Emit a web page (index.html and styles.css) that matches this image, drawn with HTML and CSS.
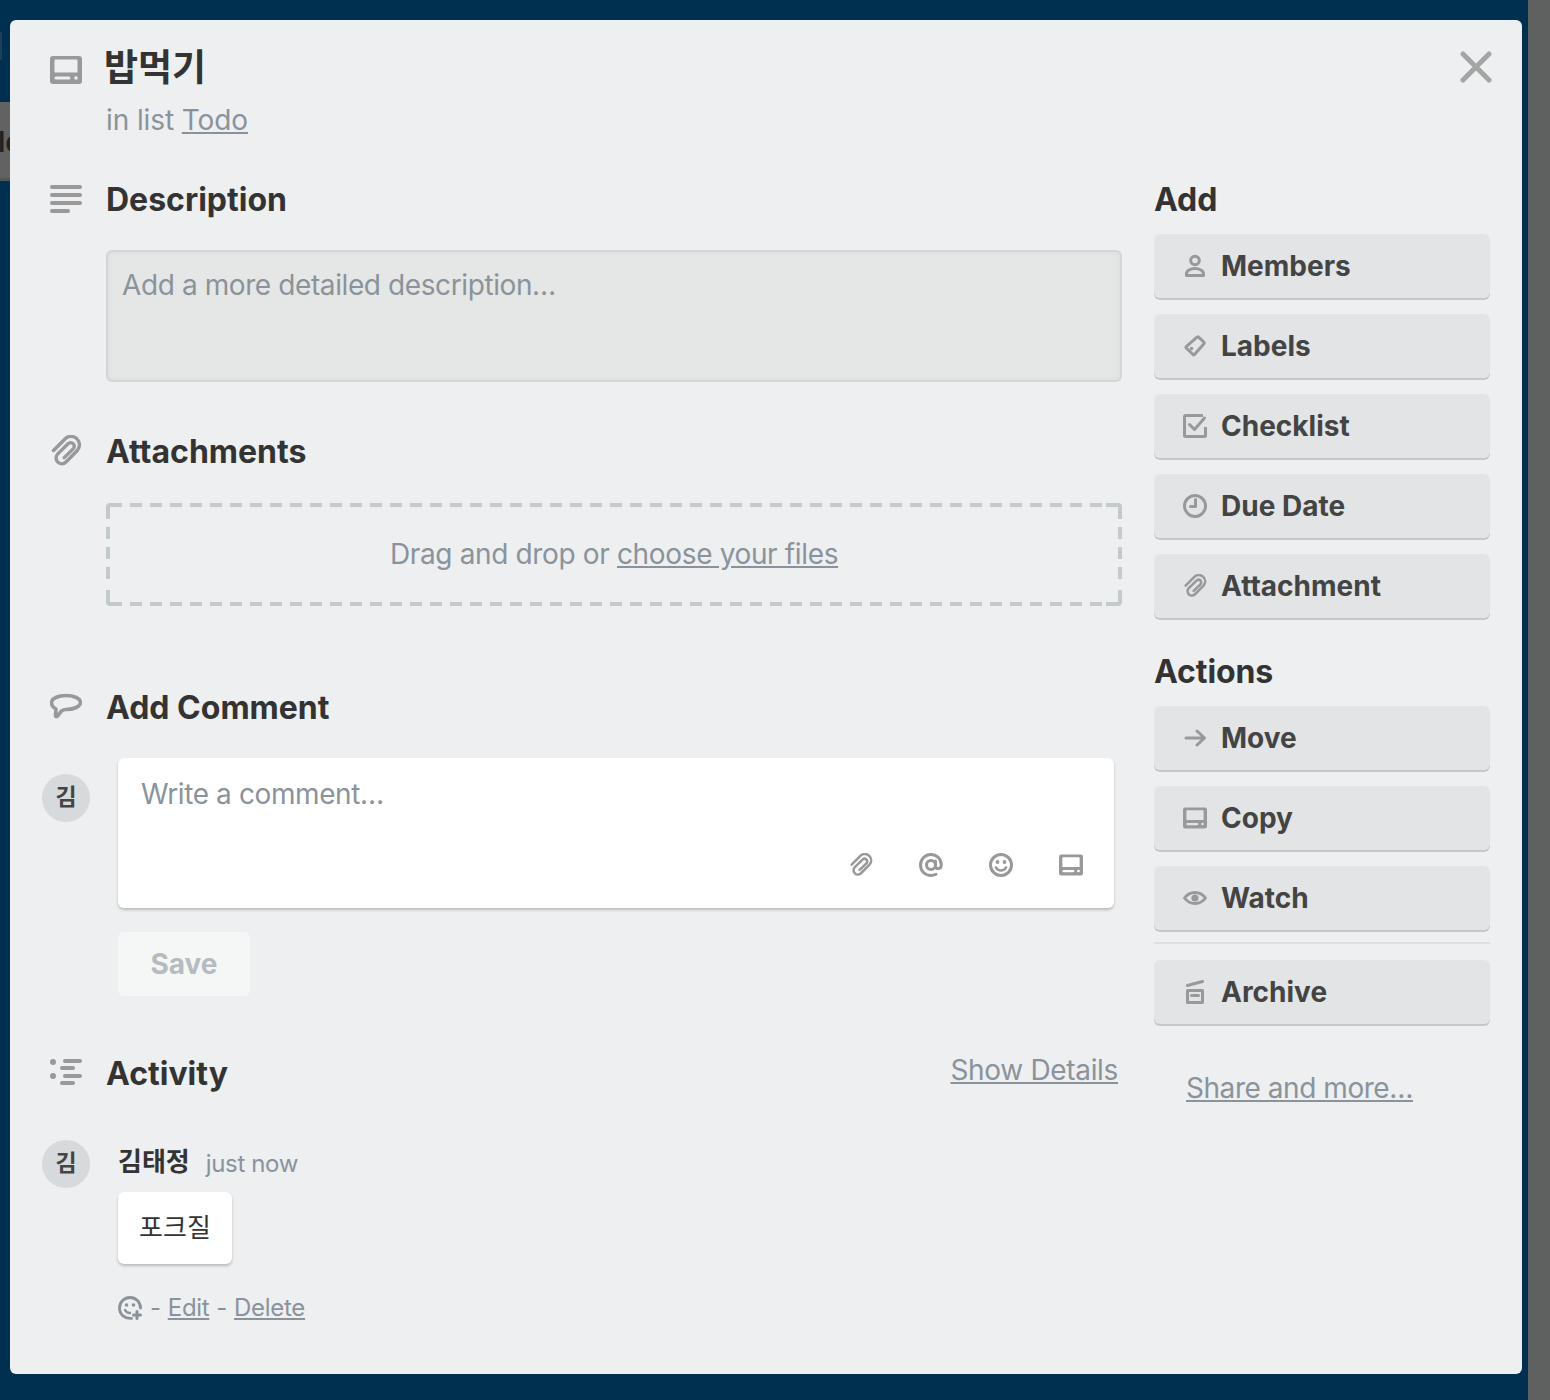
FILE: index.html

```html
<!DOCTYPE html>
<html lang="ko">
<head>
    <meta charset="UTF-8">
    <title>밥먹기 on Todo</title>
    <link rel="stylesheet" href="styles.css">
</head>
<body>
    <!-- icons -->
    <svg class="icon-defs" aria-hidden="true">
        <symbol id="i-card" viewBox="0 0 32 28">
            <path fill="currentColor" fill-rule="evenodd" d="M3 0h26a3 3 0 0 1 3 3v22a3 3 0 0 1-3 3H3a3 3 0 0 1-3-3V3a3 3 0 0 1 3-3zM5.500 3.500a1 1 0 0 0-1 1v12h23v-12a1 1 0 0 0-1-1zM6 20.500a1.500 1.500 0 0 0 0 3h13a1.500 1.500 0 0 0 0-3zM26 20.200a1.800 1.800 0 1 0 0 3.600 1.800 1.800 0 0 0 0-3.600z"/>
        </symbol>
        <symbol id="i-desc" viewBox="0 0 32 32">
            <g fill="currentColor">
                <rect x="0" y="2" width="32" height="4" rx="2"/>
                <rect x="0" y="10" width="32" height="4" rx="2"/>
                <rect x="0" y="18" width="32" height="4" rx="2"/>
                <rect x="0" y="26" width="20" height="4" rx="2"/>
            </g>
        </symbol>
        <symbol id="i-clip" viewBox="0 0 32 32">
            <path fill="none" stroke="currentColor" stroke-width="3.400" stroke-linecap="round" stroke-linejoin="round" d="M3.500 15.500 15.500 3.500c3.200-3 8.300-2.800 11.500.4 3.300 3.300 3.300 8.300.3 11.600L16 27c-2.400 2.300-6 2.300-8.200.1-2.300-2.300-2.300-5.900 0-8.200L18 8.800c1.600-1.500 3.800-1.500 5.200-.1 1.500 1.500 1.500 3.700 0 5.200l-9 8.700"/>
        </symbol>
        <symbol id="i-comment" viewBox="0 0 32 32">
            <path fill="none" stroke="currentColor" stroke-width="3.600" stroke-linejoin="round" d="M16 4.500c8 0 14.500 3 14.500 7s-6.500 7-14.500 7c-1.500 0-3 .5-4.500 1.500L7 25.500c-1 .5-1.500-.5-1.500-1L6 18c-3-1.500-4.500-4-4.500-6.500 0-4 6.500-7 14.500-7z"/>
        </symbol>
        <symbol id="i-activity" viewBox="0 0 32 32">
            <g fill="currentColor">
                <circle cx="3" cy="5" r="3"/>
                <circle cx="3" cy="19" r="3"/>
                <rect x="13" y="2" width="19" height="4" rx="2"/>
                <rect x="10" y="9" width="15" height="4" rx="2"/>
                <rect x="13" y="17" width="19" height="4" rx="2"/>
                <rect x="10" y="24" width="15" height="4" rx="2"/>
            </g>
        </symbol>
        <symbol id="i-close" viewBox="0 0 32 32">
            <path fill="none" stroke="currentColor" stroke-width="5" stroke-linecap="round" d="M3 3l26 26M29 3 3 29"/>
        </symbol>
        <symbol id="i-member" viewBox="0 0 24 24">
            <g fill="none" stroke="currentColor" stroke-width="3" stroke-linejoin="round">
                <circle cx="12" cy="6.500" r="4.300"/>
                <path d="M3.500 21.500h17v-1.800c0-3-3.800-5.200-8.500-5.200s-8.500 2.200-8.500 5.200z"/>
            </g>
        </symbol>
        <symbol id="i-label" viewBox="0 0 24 24">
            <path fill="none" stroke="currentColor" stroke-width="3" stroke-linejoin="round" d="M3.200 12.600 14 3.200c.6-.4 1.200-.4 1.600 0l5.300 5c.5.5.5 1 .1 1.500L11.500 20.500c-.5.5-1 .5-1.500 0L3.200 14c-.4-.5-.4-1 0-1.400z"/>
            <circle cx="8.500" cy="14.500" r="1.800" fill="currentColor"/>
        </symbol>
        <symbol id="i-check" viewBox="0 0 24 24">
            <g fill="none" stroke="currentColor" stroke-width="3" stroke-linejoin="round">
                <path d="M20 1.500H2.500a1 1 0 0 0-1 1v19a1 1 0 0 0 1 1h19a1 1 0 0 0 1-1V13"/>
                <path d="M6.500 10.500l5 5L21.500 4" stroke-linecap="round"/>
            </g>
        </symbol>
        <symbol id="i-clock" viewBox="0 0 24 24">
            <g fill="none" stroke="currentColor" stroke-width="3">
                <circle cx="12" cy="12" r="10.500"/>
                <path d="M12.500 5.500v7H7.500" stroke-linecap="round" stroke-linejoin="round"/>
            </g>
        </symbol>
        <symbol id="i-arrow" viewBox="0 0 24 24">
            <path fill="none" stroke="currentColor" stroke-width="3" stroke-linecap="round" stroke-linejoin="round" d="M3 12h18M14 5l7.500 7-7.500 7"/>
        </symbol>
        <symbol id="i-eye" viewBox="0 0 24 24">
            <path fill="none" stroke="currentColor" stroke-width="2.800" stroke-linejoin="round" d="M1.500 12C4 8.500 7.500 6.500 12 6.500s8 2 10.500 5.500c-2.500 3.500-6 5.500-10.500 5.500S4 15.500 1.500 12z"/>
            <circle cx="12" cy="12" r="3.600" fill="currentColor"/>
        </symbol>
        <symbol id="i-archive" viewBox="0 0 24 24">
            <g fill="none" stroke="currentColor" stroke-width="3" stroke-linecap="round" stroke-linejoin="round">
                <path d="M4.500 10.500h15v12h-15z"/>
                <path d="M8.500 15.500h7"/>
                <path d="M4.500 5.500 19.500 1.500"/>
            </g>
        </symbol>
        <symbol id="i-at" viewBox="0 0 24 24">
            <g fill="none" stroke="currentColor" stroke-width="3" stroke-linecap="round">
                <circle cx="12" cy="12" r="4.500"/>
                <path d="M16.500 8v5.500c0 3 5.800 3 5.800-1.500C22.300 6 17.700 1.500 12 1.500S1.500 6 1.500 12 6 22.500 12 22.500c2 0 3.500-.4 5-1.200"/>
            </g>
        </symbol>
        <symbol id="i-smile" viewBox="0 0 24 24">
            <circle cx="12" cy="12" r="10.500" fill="none" stroke="currentColor" stroke-width="3"/>
            <circle cx="8.500" cy="9" r="1.900" fill="currentColor"/>
            <circle cx="15.500" cy="9" r="1.900" fill="currentColor"/>
            <path fill="none" stroke="currentColor" stroke-width="2.600" stroke-linecap="round" d="M7 14.500c1 2 3 3 5 3s4-1 5-3"/>
        </symbol>
        <symbol id="i-react" viewBox="0 0 24 24">
            <path fill="none" stroke="currentColor" stroke-width="2.800" stroke-linecap="round" d="M13.500 22.300C7 23 1.500 18.500 1.500 12a10.500 10.500 0 0 1 21 0"/>
            <circle cx="8.500" cy="9" r="1.800" fill="currentColor"/>
            <circle cx="15.500" cy="9" r="1.800" fill="currentColor"/>
            <path fill="none" stroke="currentColor" stroke-width="2.400" stroke-linecap="round" d="M7 14c1 2 3 3 5 3"/>
            <path fill="none" stroke="currentColor" stroke-width="3" stroke-linecap="round" d="M19 15.500v7M15.500 19h7"/>
        </symbol>
    </svg>

    <div class="behind-card">ld</div>
    <div class="behind-sliver"></div>

    <div class="board">
        <div class="modal">
            <header class="card-head">
                <svg class="icon icon-head"><use href="#i-card"/></svg>
                <div>
                    <h1 class="card-title">밥먹기</h1>
                    <p class="card-list">in list <a href="#">Todo</a></p>
                </div>
                <a class="close" href="#" aria-label="Close"><svg class="icon icon-close"><use href="#i-close"/></svg></a>
            </header>

            <main class="main-col">
                <div class="heading">
                    <svg class="icon icon-section"><use href="#i-desc"/></svg>
                    <h2>Description</h2>
                </div>
                <div class="desc-box">Add a more detailed description…</div>

                <div class="heading heading-attach">
                    <svg class="icon icon-section"><use href="#i-clip"/></svg>
                    <h2>Attachments</h2>
                </div>
                <div class="dropzone">
                    <svg class="dropzone-border" width="1016" height="103" aria-hidden="true">
                        <g fill="none" stroke="#c3cacc" stroke-width="4">
                            <path d="M2 16V4a2 2 0 0 1 2-2H16M1000 2h12a2 2 0 0 1 2 2v12M2 87v12a2 2 0 0 0 2 2H16M1014 87v12a2 2 0 0 1-2 2h-12"/>
                            <path stroke-dasharray="12 8" d="M24 2H996M24 101H996M2 24V76M1014 24V76"/>
                        </g>
                    </svg>
                    Drag and drop or&nbsp;<a href="#">choose your files</a>
                </div>

                <div class="heading heading-comment">
                    <svg class="icon icon-section"><use href="#i-comment"/></svg>
                    <h2>Add Comment</h2>
                </div>
                <div class="comment-row">
                    <div class="avatar avatar-offset">김</div>
                    <div class="comment-col">
                        <div class="comment-box">
                            <div class="comment-placeholder">Write a comment…</div>
                            <div class="comment-tools">
                                <svg class="icon icon-tool"><use href="#i-clip"/></svg>
                                <svg class="icon icon-tool"><use href="#i-at"/></svg>
                                <svg class="icon icon-tool"><use href="#i-smile"/></svg>
                                <svg class="icon icon-tool"><use href="#i-card"/></svg>
                            </div>
                        </div>
                        <button class="save" type="button">Save</button>
                    </div>
                </div>

                <div class="heading heading-activity">
                    <svg class="icon icon-section"><use href="#i-activity"/></svg>
                    <h2>Activity</h2>
                    <a class="show-details" href="#">Show Details</a>
                </div>
                <div class="activity-row">
                    <div class="avatar">김</div>
                    <div class="comment-col">
                        <div class="activity-meta"><span class="activity-name">김태정</span><span class="activity-time">just now</span></div>
                        <div class="activity-card">포크질</div>
                        <div class="activity-actions">
                            <svg class="icon icon-react"><use href="#i-react"/></svg>
                            <span>-</span><a href="#">Edit</a><span>-</span><a href="#">Delete</a>
                        </div>
                    </div>
                </div>
            </main>

            <aside class="side-col">
                <h3>Add</h3>
                <div class="btn-list">
                    <a class="side-btn" href="#"><svg class="icon icon-btn"><use href="#i-member"/></svg>Members</a>
                    <a class="side-btn" href="#"><svg class="icon icon-btn"><use href="#i-label"/></svg>Labels</a>
                    <a class="side-btn" href="#"><svg class="icon icon-btn"><use href="#i-check"/></svg>Checklist</a>
                    <a class="side-btn" href="#"><svg class="icon icon-btn"><use href="#i-clock"/></svg>Due Date</a>
                    <a class="side-btn" href="#"><svg class="icon icon-btn"><use href="#i-clip"/></svg>Attachment</a>
                </div>
                <h3 class="actions-title">Actions</h3>
                <div class="btn-list">
                    <a class="side-btn" href="#"><svg class="icon icon-btn"><use href="#i-arrow"/></svg>Move</a>
                    <a class="side-btn" href="#"><svg class="icon icon-btn"><use href="#i-card"/></svg>Copy</a>
                    <a class="side-btn" href="#"><svg class="icon icon-btn"><use href="#i-eye"/></svg>Watch</a>
                </div>
                <hr class="side-rule">
                <a class="side-btn" href="#"><svg class="icon icon-btn"><use href="#i-archive"/></svg>Archive</a>
                <a class="share" href="#">Share and more…</a>
            </aside>
        </div>
        <div class="strip"></div>
    </div>
</body>
</html>
```

FILE: styles.css

```css
* {
    box-sizing: border-box;
}
html, body {
    height: 100%;
}
body {
    margin: 0;
    background-color: #00304f;
    color: #333;
    font-family: Inter, "Noto Sans CJK KR", sans-serif;
    font-size: 28px;
    line-height: 40px;
    overflow: hidden;
}
a {
    color: #8a939b;
}
.icon-defs {
    position: absolute;
    width: 0;
    height: 0;
}
.icon {
    display: block;
    flex: none;
    color: #999;
}

/* what shows around the modal */
.behind-card {
    position: absolute;
    left: -2px;
    top: 102px;
    width: 60px;
    height: 79px;
    padding-top: 20px;
    background-color: #626262;
    border-bottom: 3px solid #555;
    color: #222;
    font-weight: 600;
}
.behind-sliver {
    position: absolute;
    left: 0;
    top: 32px;
    width: 2px;
    height: 28px;
    background-color: #1d4058;
}
.board {
    position: relative;
    display: flex;
    height: 1400px;
    padding-left: 10px;
}
.strip {
    width: 22px;
    margin-left: 6px;
    background-color: #5f6160;
}

.modal {
    display: grid;
    grid-template-columns: 1080px 336px;
    grid-template-rows: auto 1fr;
    column-gap: 32px;
    width: 1512px;
    height: 1354px;
    margin-top: 20px;
    padding: 0 32px;
    background-color: #edeff1;
    border-radius: 6px;
}

/* head */
.card-head {
    grid-column: 1 / 3;
    position: relative;
    display: flex;
    padding: 24px 0 39px;
}
.icon-head {
    width: 32px;
    height: 28px;
    margin: 12px 24px 0 8px;
}
.card-title {
    margin: 0 0 0 -2px;
    font-size: 37px;
    line-height: 48px;
    font-weight: 700;
}
.card-list {
    margin: 8px 0 0;
    color: #8a939b;
    letter-spacing: -0.1px;
}
.close {
    position: absolute;
    right: -2px;
    top: 31px;
}
.icon-close {
    width: 32px;
    height: 32px;
    color: #a5a5a5;
}

/* main column */
.heading {
    display: flex;
    align-items: center;
    height: 40px;
}
.heading h2 {
    margin: 0;
    padding-top: 1px;
    font-size: 32px;
    line-height: 40px;
    font-weight: 700;
}
.icon-section {
    width: 32px;
    height: 32px;
    margin: 0 24px 0 8px;
}
.desc-box {
    height: 132px;
    margin: 31px 0 0 64px;
    padding: 13px 14px;
    background-color: #e5e7e6;
    border: 2px solid #d2d6d7;
    border-radius: 6px;
    box-shadow: inset 0 0 6px rgba(0, 0, 0, 0.05);
    color: #8a939b;
    letter-spacing: -0.4px;
}
.heading-attach {
    margin-top: 49px;
}
.dropzone {
    position: relative;
    display: flex;
    justify-content: center;
    align-items: center;
    height: 103px;
    margin: 32px 0 0 64px;
    padding-bottom: 1px;
    color: #8a939b;
    letter-spacing: -0.35px;
}
.dropzone-border {
    position: absolute;
    left: 0;
    top: 0;
}
.heading-comment {
    margin-top: 81px;
}
.comment-row {
    display: flex;
    margin-top: 31px;
}
.avatar {
    flex: none;
    width: 48px;
    height: 48px;
    margin-right: 28px;
    border-radius: 50%;
    background-color: #d6dadc;
    color: #444;
    font-size: 23px;
    line-height: 46px;
    font-weight: 700;
    text-align: center;
}
.avatar-offset {
    margin-top: 16px;
}
.comment-col {
    width: 996px;
}
.comment-box {
    height: 150px;
    padding: 16px 23px;
    background-color: #fff;
    border-radius: 6px;
    box-shadow: 0 2px 3px rgba(0, 0, 0, 0.22);
}
.comment-placeholder {
    color: #8a939b;
    letter-spacing: -0.4px;
}
.comment-tools {
    display: flex;
    justify-content: flex-end;
    gap: 46px;
    margin: 39px 8px 0 0;
}
.icon-tool {
    width: 24px;
    height: 24px;
}
.save {
    display: block;
    width: 132px;
    height: 64px;
    margin-top: 24px;
    padding: 0;
    background-color: #f5f7f7;
    border: 0;
    border-radius: 6px;
    color: #b6bbbf;
    font: 700 28px Inter, sans-serif;
}
.heading-activity {
    margin-top: 57px;
}
.show-details {
    margin: -6px 4px 0 auto;
    letter-spacing: -0.33px;
}
.activity-row {
    display: flex;
    margin-top: 47px;
}
.activity-meta {
    display: flex;
    align-items: center;
    height: 44px;
}
.activity-name {
    font-size: 26px;
    font-weight: 700;
    margin-right: 16px;
}
.activity-time {
    color: #8a939b;
    font-size: 24px;
    margin-top: 4px;
    letter-spacing: -0.35px;
}
.activity-card {
    width: 114px;
    height: 72px;
    margin-top: 8px;
    background-color: #fff;
    border-radius: 6px;
    box-shadow: 0 2px 3px rgba(0, 0, 0, 0.22);
    font-size: 26px;
    line-height: 72px;
    text-align: center;
}
.activity-actions {
    display: flex;
    align-items: center;
    gap: 7px;
    margin-top: 24px;
    color: #8a939b;
    font-size: 24px;
    letter-spacing: -0.3px;
}
.icon-react {
    width: 24px;
    height: 24px;
    margin-right: 1px;
    color: #8a939b;
}

/* side column */
.side-col h3 {
    height: 40px;
    margin: 0 0 15px;
    font-size: 32px;
    line-height: 41px;
    font-weight: 700;
    letter-spacing: -0.1px;
}
.side-col .actions-title {
    margin-top: 33px;
}
.btn-list {
    display: flex;
    flex-direction: column;
    gap: 16px;
}
.side-btn {
    display: flex;
    align-items: center;
    height: 64px;
    padding-left: 29px;
    background-color: #e2e4e6;
    border-radius: 6px;
    box-shadow: 0 2px 0 #c3c8ca;
    color: #444;
    font-weight: 700;
    text-decoration: none;
}
.icon-btn {
    width: 24px;
    height: 24px;
    margin-right: 14px;
}
.side-rule {
    height: 2px;
    margin: 12px 0 16px;
    background-color: #dcdfe1;
    border: 0;
}
.share {
    display: inline-block;
    margin: 44px 0 0 32px;
    letter-spacing: -0.45px;
}
```
